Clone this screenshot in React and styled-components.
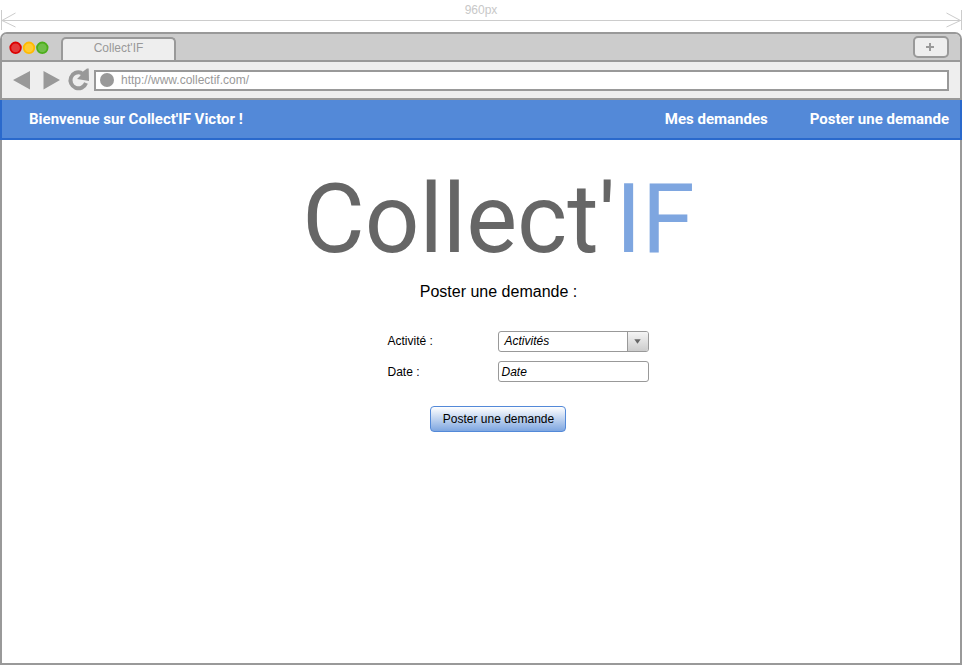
import React from "react";
import styled, { createGlobalStyle } from "styled-components";

const GlobalStyle = createGlobalStyle`
  *, *::before, *::after { box-sizing: border-box; }
  body { margin: 0; background: #fff; font-family: "Liberation Sans", Arial, sans-serif; overflow: hidden; }
  button, input { font: inherit; margin: 0; }
`;

const Page = styled.div`
  width: 962px;
  height: 665px;
  display: flex;
  flex-direction: column;
`;

const Ruler = styled.div`
  height: 32px;
  flex: none;
  display: flex;
  flex-direction: column;
  align-items: center;
  color: #c8c8c8;
  font-size: 12px;
  line-height: 14px;
  padding-top: 3px;
  svg { display: block; margin-top: -7px; flex: none; }
`;

const Window = styled.div`
  flex: 1;
  display: flex;
  flex-direction: column;
  border: 2px solid #999;
  border-radius: 7px 7px 0 0;
`;

const TabBar = styled.div`
  height: 28px;
  flex: none;
  display: flex;
  padding: 3px 11px 0 7px;
  background: #ccc;
  border-bottom: 2px solid #999;
  border-radius: 5px 5px 0 0;
`;

const Lights = styled.div`
  width: 52px;
  padding-top: 4px;
  svg { display: block; }
`;

const Tab = styled.div`
  width: 115px;
  height: 23px;
  border: 2px solid #999;
  border-bottom: 0;
  border-radius: 5px 5px 0 0;
  background: #eee;
  color: #999;
  font-size: 12px;
  line-height: 19px;
  text-align: center;
`;

const NewTab = styled.button`
  width: 36px;
  height: 22px;
  margin: -1px 0 0 auto;
  padding: 0 2px 1px 0;
  display: flex;
  align-items: center;
  justify-content: center;
  border: 2px solid #999;
  border-radius: 5px;
  background: #eee;
`;

const Toolbar = styled.div`
  height: 38px;
  flex: none;
  display: flex;
  padding: 5px 11px 0 10px;
  background: #eee;
  border-bottom: 2px solid #999;
  svg { flex: none; }
`;

const Address = styled.div`
  flex: 1;
  height: 21px;
  margin-top: 3px;
  display: flex;
  align-items: center;
  gap: 7px;
  padding: 0 3px 1px 4px;
  border: 2px solid #999;
  background: #fff;
  color: #999;
  font-size: 12px;
`;

const SiteDot = styled.span`
  width: 14px;
  height: 14px;
  border-radius: 50%;
  background: #999;
`;

const Nav = styled.nav`
  height: 40px;
  flex: none;
  display: flex;
  margin: 0 -2px;
  padding: 0 11px 0 27px;
  border: 2px solid #2a69cc;
  border-top: 0;
  background: #5389d8;
  color: #fff;
  font: bold 15px/39px Roboto, sans-serif;
`;

const Welcome = styled.span`
  margin-right: auto;
`;

const NavLink = styled.a`
  margin-left: 42px;
`;

const Content = styled.main`
  flex: 1;
  display: flex;
  flex-direction: column;
  align-items: center;
  padding-left: 34px;
`;

const Logo = styled.h1`
  margin: 23px 0 0;
  padding-left: 1px;
  height: 112px;
  font: 400 96px/112px Roboto, sans-serif;
  color: #666;
  white-space: nowrap;
  span { color: #7ea6e0; }
`;

const Heading = styled.h2`
  margin: 8px 0 0;
  padding-left: 1px;
  font-size: 16px;
  line-height: 18px;
  font-weight: 400;
  color: #000;
`;

const Form = styled.form`
  width: 261px;
  margin: 30px 0 0 40px;
  display: grid;
  grid-template-columns: 110px 151px;
  grid-auto-rows: 21px;
  row-gap: 9px;
  font-size: 12px;
  color: #000;
`;

const Label = styled.label`
  line-height: ${(p) => p.$line};
`;

const Field = styled.div`
  height: 21px;
  display: flex;
  border: 1px solid #999;
  border-radius: 3px;
  background: #fff;
  overflow: hidden;
  font-style: italic;
  line-height: ${(p) => p.$line};
  padding-left: ${(p) => p.$inset};
`;

const Arrow = styled.span`
  width: 21px;
  height: 19px;
  margin-left: auto;
  display: flex;
  align-items: center;
  justify-content: center;
  border-left: 1px solid #999;
  background: linear-gradient(#f5f5f5, #ccc);
`;

const Submit = styled.button`
  width: 136px;
  height: 26px;
  margin-top: 24px;
  padding: 0 0 1px 1px;
  border: 1px solid #5389d8;
  border-radius: 4px;
  background: linear-gradient(#fff, #7ea6e0);
  font-size: 12px;
  color: #000;
`;

export default function App() {
  return (
    <Page>
      <GlobalStyle />
      <Ruler>
        960px
        <svg width="962" height="22" viewBox="0 0 962 22" fill="none" stroke="#ccc">
          <path d="M1.5 0v20M961.5 0v20M2 10.5h959M15.5 3L2 10.5l13.5 6.5M946.500 3L960.500 10.500l-14 6.500" />
        </svg>
      </Ruler>
      <Window>
        <TabBar>
          <Lights>
            <svg width="42" height="14" viewBox="0 0 42 14" strokeWidth="1.8">
              <circle cx="6.600" cy="6.800" r="5.300" stroke="#dc0000" fill="#e33b3b" />
              <circle cx="20" cy="6.800" r="5.300" stroke="#ffba00" fill="#ffcb33" />
              <circle cx="33.300" cy="6.800" r="5.300" stroke="#4cae1a" fill="#70be48" />
            </svg>
          </Lights>
          <Tab>Collect'IF</Tab>
          <NewTab aria-label="Nouvel onglet">
            <svg width="8" height="8" viewBox="0 0 8 8" stroke="#999" strokeWidth="2">
              <path d="M4 0v8M0 4h8" />
            </svg>
          </NewTab>
        </TabBar>
        <Toolbar>
          <svg width="82" height="26" viewBox="12 67 82 26">
            <g fill="#999">
              <path d="M13 80L30 71v18.500zM43.500 71L60 80 43.500 89.500z" />
              <path d="M80 71.500L83 71.500 87 68.500 88.700 68.500 89 81 77 79 80.500 75.500z" />
            </g>
            <path d="M81.500 72.900A8 8 0 1 0 86 83" fill="none" stroke="#999" strokeWidth="4" />
          </svg>
          <Address>
            <SiteDot />
            http://www.collectif.com/
          </Address>
        </Toolbar>
        <Nav>
          <Welcome>Bienvenue sur Collect'IF Victor !</Welcome>
          <NavLink>Mes demandes</NavLink>
          <NavLink>Poster une demande</NavLink>
        </Nav>
        <Content>
          <Logo>Collect'<span>IF</span></Logo>
          <Heading>Poster une demande :</Heading>
          <Form>
            <Label $line="20px">Activité :</Label>
            <Field $inset="6px" $line="18px">
              Activités
              <Arrow>
                <svg width="7" height="5" viewBox="0 0 7 5"><path d="M.3 .3h6.400L3.500 4.800z" fill="#666" /></svg>
              </Arrow>
            </Field>
            <Label $line="22px">Date :</Label>
            <Field $inset="3px" $line="20px">Date</Field>
          </Form>
          <Submit type="button">Poster une demande</Submit>
        </Content>
      </Window>
    </Page>
  );
}
